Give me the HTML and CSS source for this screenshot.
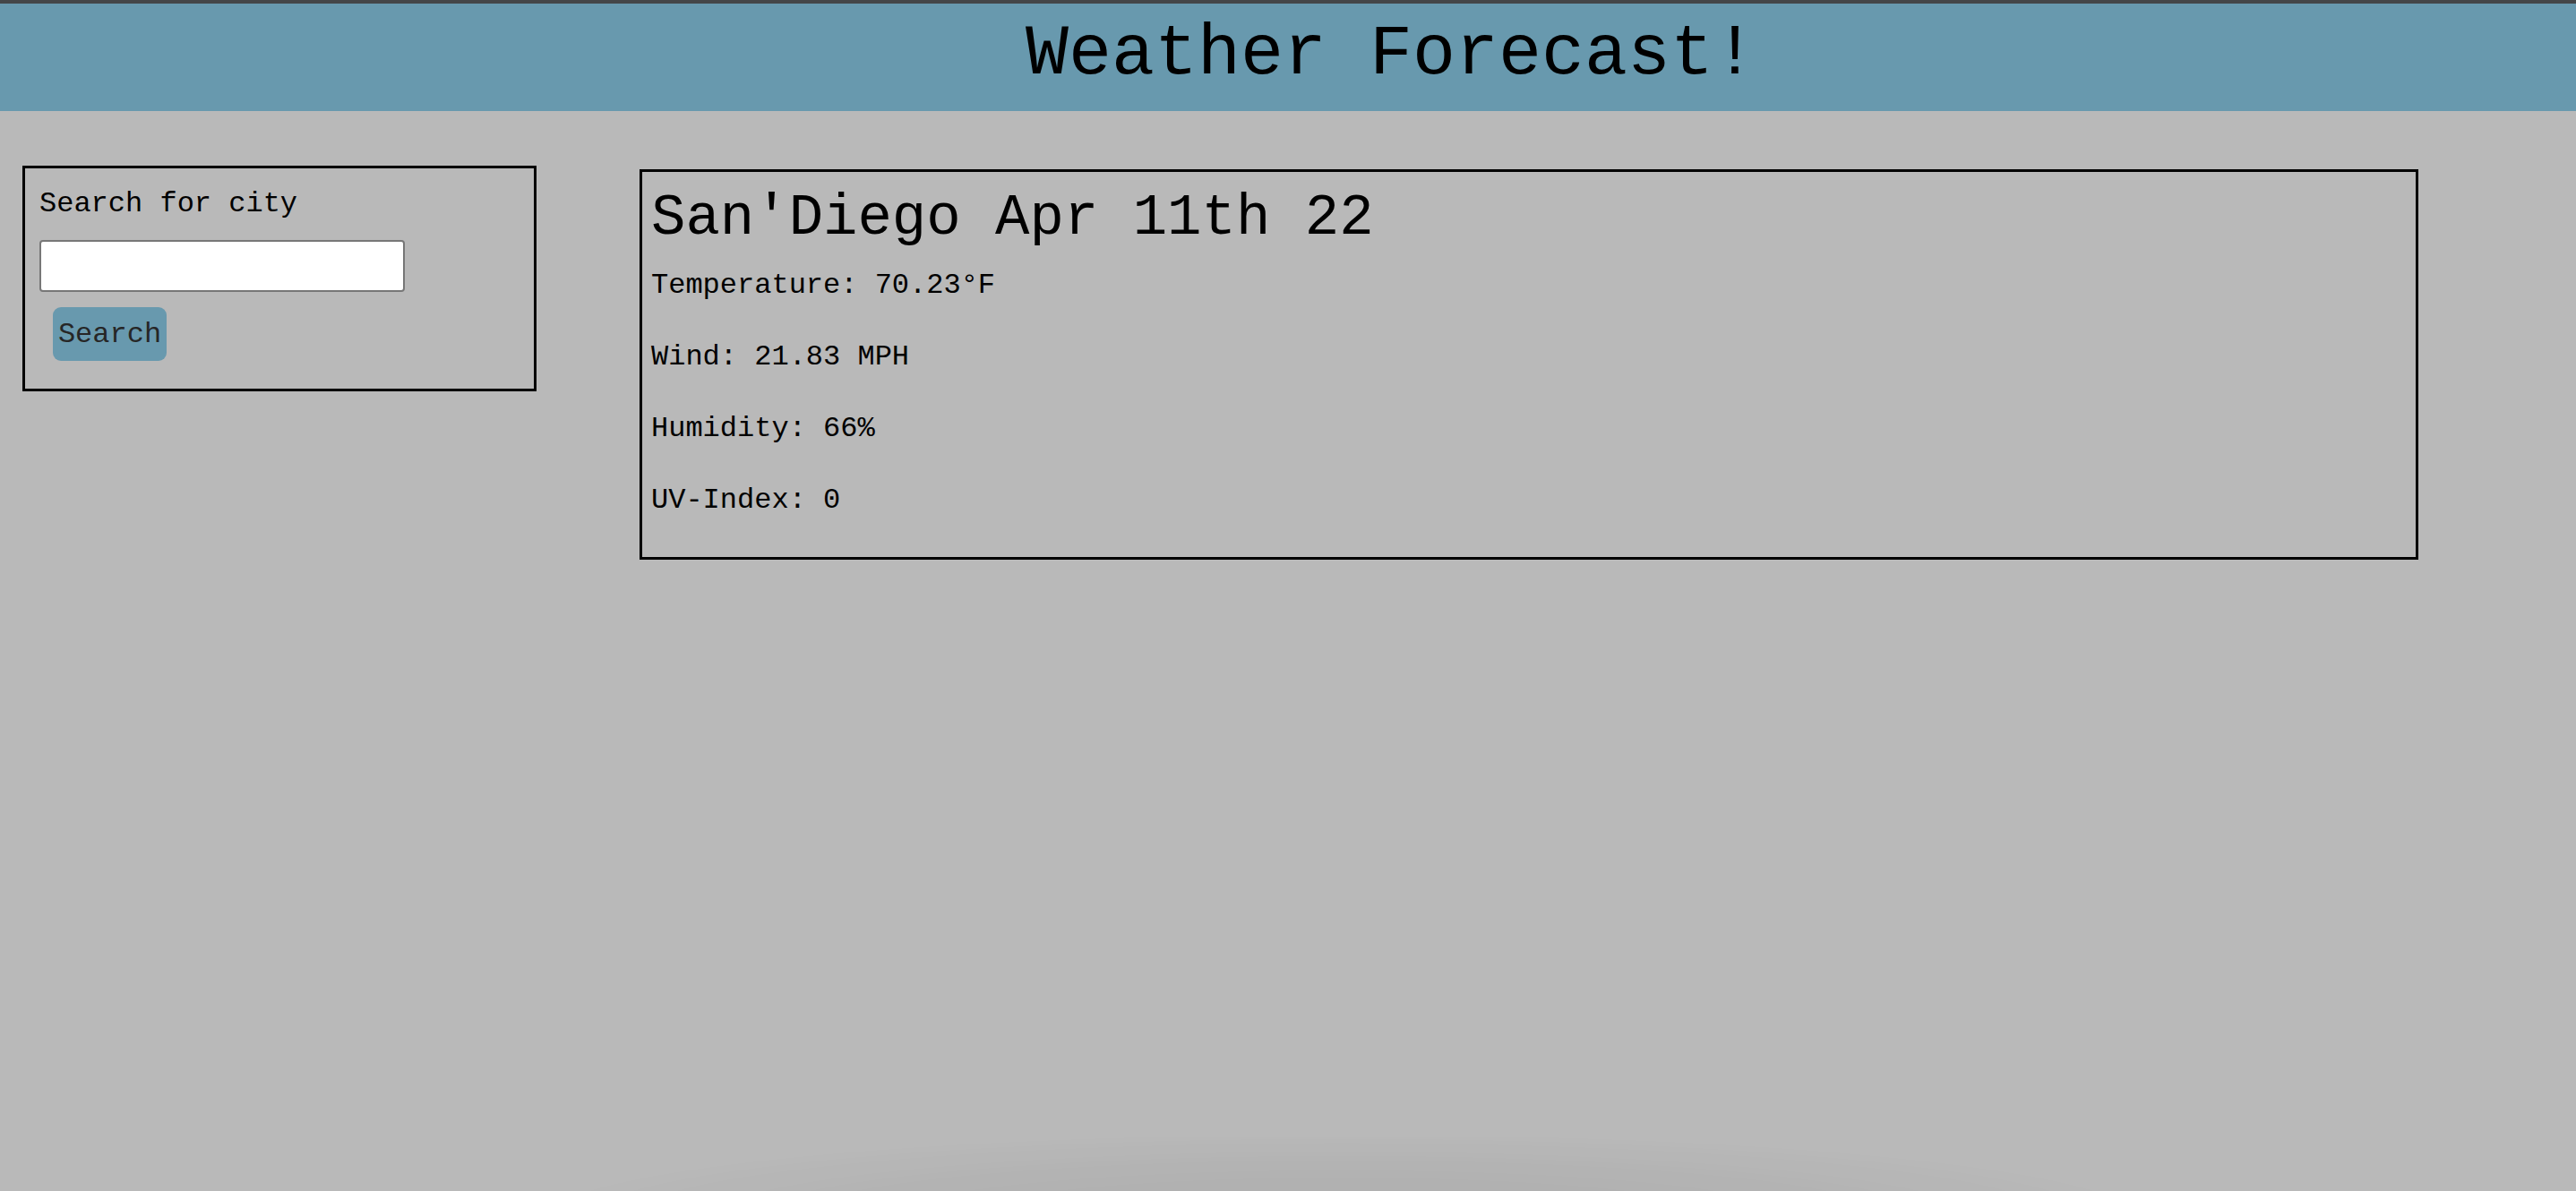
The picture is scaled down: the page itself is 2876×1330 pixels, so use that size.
FILE: index.html
```html
<!DOCTYPE html>
<html lang="en">
<head>
<meta charset="utf-8">
<title>Weather Forecast!</title>
<link rel="stylesheet" href="styles.css">
</head>
<body>
<header class="site-header">
  <h1 class="site-title">Weather Forecast!</h1>
</header>
<main class="layout">
  <section class="search-box">
    <label class="search-label" for="city">Search for city</label>
    <input class="search-input" id="city" type="text">
    <button class="search-btn" type="button">Search</button>
  </section>
  <section class="current-card">
    <h2 class="current-title">San'Diego Apr 11th 22</h2>
    <p class="stat">Temperature: 70.23°F</p>
    <p class="stat">Wind: 21.83 MPH</p>
    <p class="stat">Humidity: 66%</p>
    <p class="stat">UV-Index: 0</p>
  </section>
</main>
<div class="dock-shadow"></div>
</body>
</html>
```

FILE: styles.css
```css
html, body {
  margin: 0;
  padding: 0;
}

body {
  background: #b9b9b9;
  font-family: "Courier New", "Nimbus Mono PS", "FreeMono", "Liberation Mono", monospace;
  color: #000;
  min-height: 1330px;
}

.site-header {
  background: #6899ae;
  border-top: 4px solid #444648;
  padding: 11px 0 18px 230px;
  text-align: center;
}

.site-title {
  margin: 0;
  font-size: 80px;
  font-weight: normal;
  line-height: 91px;
}

.layout {
  display: flex;
  align-items: flex-start;
  padding: 61px 0 0 25px;
}

.search-box {
  border: 3px solid #000;
  padding: 22px 0 31px 16px;
  display: flex;
  flex-direction: column;
  align-items: flex-start;
  box-sizing: content-box;
  width: 552px;
}

.search-label {
  font-size: 32px;
  line-height: 36px;
}

.search-input {
  margin-top: 22px;
  width: 408px;
  height: 58px;
  box-sizing: border-box;
  border: 2px solid #777;
  border-radius: 4px;
  background: #fff;
  padding: 0 6px;
  font-family: inherit;
  font-size: 28px;
}

.search-btn {
  margin: 17px 0 0 15px;
  width: 127px;
  height: 60px;
  border: 0;
  border-radius: 9px;
  background: #6899ae;
  color: #262626;
  font-family: inherit;
  font-size: 32px;
  padding: 2px 0 0;
  line-height: 36px;
  cursor: pointer;
}

.current-card {
  margin: 4px 0 0 115px;
  width: 1986px;
  border: 3px solid #000;
  padding: 16px 10px 1px;
  box-sizing: border-box;
}

.current-title {
  margin: 0 0 21px;
  font-size: 64px;
  font-weight: normal;
  line-height: 72px;
}

.stat {
  margin: 0 0 44px;
  font-size: 32px;
  line-height: 36px;
}

.dock-shadow {
  position: fixed;
  left: 640px;
  right: 520px;
  bottom: -30px;
  height: 90px;
  background: radial-gradient(ellipse at 50% 100%, rgba(0,0,0,0.06) 0%, rgba(0,0,0,0.03) 45%, rgba(0,0,0,0) 75%);
  pointer-events: none;
}
```
